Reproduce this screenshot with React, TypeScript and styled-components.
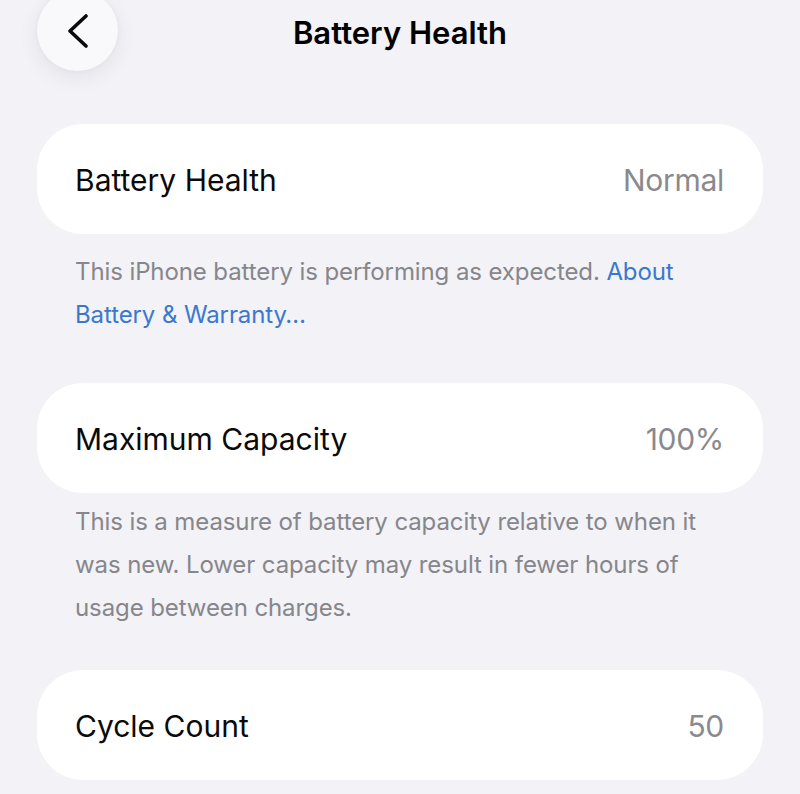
import React from "react";
import styled, { createGlobalStyle } from "styled-components";

const GlobalStyle = createGlobalStyle`
  html, body {
    margin: 0;
    padding: 0;
    background: #f2f2f7;
    overflow: hidden;
  }
  body {
    font-family: Inter, Roboto, "Liberation Sans", sans-serif;
    -webkit-font-smoothing: antialiased;
  }
`;

const Screen = styled.div`
  width: 800px;
  height: 794px;
  box-sizing: border-box;
  padding: 0 37px;
  background: #f2f2f7;
  overflow: hidden;
`;

const NavBar = styled.header`
  display: grid;
  grid-template-columns: 81px 1fr 81px;
  align-items: start;
  margin-top: -10px;
  margin-bottom: 53px;
`;

const BackButton = styled.button`
  width: 81px;
  height: 81px;
  border-radius: 50%;
  border: none;
  padding: 0;
  background: #f9f9fb;
  box-shadow: 0 6px 22px rgba(0, 0, 0, 0.07), 0 0 6px rgba(0, 0, 0, 0.03);
  display: flex;
  align-items: center;
  justify-content: center;
`;

const Title = styled.h1`
  margin: 0;
  padding-top: 21px;
  text-align: center;
  font-size: 31px;
  line-height: 44px;
  font-weight: 600;
  color: #000;
  letter-spacing: 0;
`;

const Card = styled.div`
  height: 110px;
  box-sizing: border-box;
  padding: 1px 39px 0 38px;
  background: #fff;
  border-radius: 46px;
  display: flex;
  align-items: center;
  justify-content: space-between;
`;

const Label = styled.span`
  font-size: 30px;
  color: #0a0a0a;
  letter-spacing: 0;
`;

const Value = styled.span`
  font-size: 30px;
  color: #8a8a8e;
  letter-spacing: -0.3px;
`;

const Note = styled.p<{ $top: number; $bottom: number }>`
  margin: ${(p) => p.$top}px 0 ${(p) => p.$bottom}px;
  padding: 0 38px;
  font-size: 24px;
  line-height: 43px;
  color: #86868b;
  letter-spacing: -0.1px;
`;

const Link = styled.a`
  color: #3a78cf;
  text-decoration: none;
`;

const Chevron = () => (
  <svg width="22" height="34" viewBox="0 0 22 34" fill="none">
    <path
      d="M19 2 L3 17 L19 32"
      stroke="#0a0a0a"
      strokeWidth="3.6"
      strokeLinecap="round"
      strokeLinejoin="round"
    />
  </svg>
);

export default function App() {
  return (
    <>
      <GlobalStyle />
      <Screen>
        <NavBar>
          <BackButton aria-label="Back">
            <Chevron />
          </BackButton>
          <Title>Battery Health</Title>
          <span />
        </NavBar>

        <Card>
          <Label>Battery Health</Label>
          <Value>Normal</Value>
        </Card>
        <Note $top={16} $bottom={47}>
          This iPhone battery is performing as expected.{" "}
          <Link href="#">About Battery &amp; Warranty…</Link>
        </Note>

        <Card>
          <Label>Maximum Capacity</Label>
          <Value>100%</Value>
        </Card>
        <Note $top={7} $bottom={41}>
          This is a measure of battery capacity relative to when it was new.
          Lower capacity may result in fewer hours of usage between charges.
        </Note>

        <Card>
          <Label>Cycle Count</Label>
          <Value>50</Value>
        </Card>
      </Screen>
    </>
  );
}
